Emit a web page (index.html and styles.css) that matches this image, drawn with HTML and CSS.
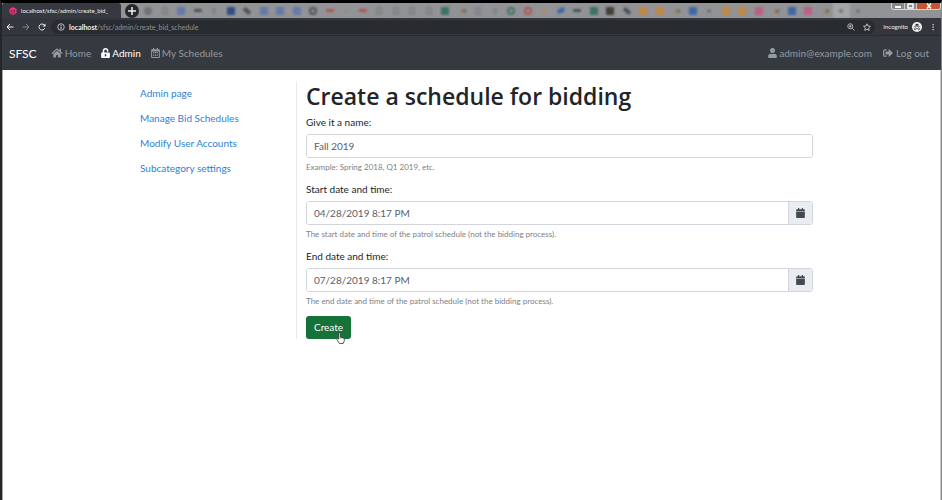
FILE: index.html
```html
<!DOCTYPE html>
<html lang="en">
<head>
<meta charset="utf-8">
<meta name="viewport" content="width=device-width, initial-scale=1">
<title>localhost/sfsc/admin/create_bid_schedule</title>
<link rel="stylesheet" href="styles.css">
</head>
<body>
<div class="window">
  <div class="tabstrip">
    <div class="tab">
      <svg class="tab-logo" viewBox="0 0 16 16" aria-hidden="true"><path fill="#f0387c" d="M8 0l7 4v8l-7 4-7-4V4z"/><path fill="none" stroke="#7d1742" stroke-width="1.500" d="M4.500 5.500v4a3.500 3 0 0 0 7 0v-4M5 6l2.500 2.500L11 5.500"/></svg>
      <span class="tab-title">localhost/sfsc/admin/create_bid_</span>
      <button class="tab-close" aria-label="Close tab"><svg viewBox="0 0 10 10"><path d="M1.500 1.500l7 7m0-7l-7 7" fill="none" stroke="currentColor" stroke-width="1.500"/></svg></button>
    </div>
    <button class="new-tab" aria-label="New tab"><svg viewBox="0 0 14 14"><path d="M7 3v8M3 7h8" fill="none" stroke="currentColor" stroke-width="1.500"/></svg></button>
    <div class="favicons" aria-hidden="true">
      <i class="round gray"></i><i class="page"></i><i class="blue"></i><i class="flat dark"></i><i class="page small"></i><i class="navy"></i><i class="slant dark"></i><i class="blue"></i><i class="blue"></i><i class="blue"></i><i class="ring dark"></i><i class="flat red"></i><i class="dot tan"></i><i class="flat red"></i><i class="page"></i><i class="page"></i><i class="page"></i><i class="page"></i><i class="green"></i><i class="wedge"></i><i class="page"></i><i class="page small"></i><i class="ring green"></i><i class="ring red"></i><i class="dot orange"></i><i class="leaf blue"></i><i class="flat dark"></i><i class="green"></i><i class="olive"></i><i class="slant dark"></i><i class="orange"></i><i class="orange"></i><i class="wedge"></i><i class="blue strong"></i><i class="dot gray"></i><i class="orange"></i><i class="orange"></i><i class="pink"></i><i class="wedge"></i><i class="blue strong"></i><i class="pink"></i><i class="wedge"></i><i class="dot gray current"></i><i class="dot gray"></i>
    </div>
    <div class="window-controls">
      <button aria-label="Minimize"><svg viewBox="0 0 10 6"><path d="M2 4h6" stroke="#fff" stroke-width="2"/></svg></button>
      <button aria-label="Maximize"><svg viewBox="0 0 10 6"><path d="M3 1h5v4H3z" fill="none" stroke="#fff" stroke-width="1.500"/></svg></button>
      <button class="close" aria-label="Close"><svg viewBox="0 0 10 6"><path d="M3 .5l4 5m0-5l-4 5" fill="none" stroke="#fff" stroke-width="1.500"/></svg></button>
    </div>
  </div>

  <div class="toolbar">
    <button aria-label="Back"><svg viewBox="0 0 16 16"><path d="M15 8H2m6-6L2 8l6 6" fill="none" stroke="#f1f1f1" stroke-width="2"/></svg></button>
    <button aria-label="Forward"><svg viewBox="0 0 16 16"><path d="M1 8h13M8 2l6 6-6 6" fill="none" stroke="#85878b" stroke-width="2"/></svg></button>
    <button aria-label="Reload"><svg viewBox="0 0 16 16"><path d="M13.500 10.500A6 6 0 1 1 12.500 4" fill="none" stroke="#f1f1f1" stroke-width="2"/><path d="M15 1v6H9z" fill="#f1f1f1"/></svg></button>
    <div class="omnibox">
      <svg viewBox="0 0 16 16" aria-hidden="true"><circle cx="8" cy="8" r="6.500" fill="none" stroke="#dfe0e2" stroke-width="1.600"/><path d="M8 7v5M8 4v1.800" stroke="#dfe0e2" stroke-width="2"/></svg>
      <div class="url" role="textbox" contenteditable="true" spellcheck="false" aria-label="Address"><b>localhost</b>/sfsc/admin/create_bid_schedule</div>
      <button aria-label="Zoom"><svg viewBox="0 0 16 16"><circle cx="6.500" cy="6.500" r="5" fill="none" stroke="#d5d6d8" stroke-width="1.600"/><path d="M10.500 10.500l4.500 4.500M4 6.500h5M6.500 4v5" stroke="#d5d6d8" stroke-width="1.600"/></svg></button>
      <button aria-label="Bookmark"><svg viewBox="0 0 16 16"><path d="M8 1.500l2 4.500 5 .5-3.700 3.300L12.400 15 8 12.200 3.600 15l1.100-5.200L1 6.500 6 6z" fill="none" stroke="#e4e5e7" stroke-width="1.500"/></svg></button>
    </div>
    <span class="incognito">Incognito</span>
    <svg class="spy" viewBox="0 0 20 20" aria-hidden="true"><circle cx="10" cy="10" r="10" fill="#f1f1f1"/><path d="M6.500 7.500l1-4 2.500.7 2.500-.7 1 4zM3.500 8.300h13v1.400h-13z" fill="#303236"/><path d="M8.500 13q1.500-1 3 0" fill="none" stroke="#303236"/><circle cx="6.500" cy="13.500" r="2" fill="none" stroke="#303236" stroke-width="1.300"/><circle cx="13.500" cy="13.500" r="2" fill="none" stroke="#303236" stroke-width="1.300"/></svg>
    <button aria-label="Menu"><svg viewBox="0 0 16 16"><path d="M7 2h2.500v2.500H7zM7 7h2.500v2.500H7zM7 12h2.500v2.500H7z" fill="#dedfe1"/></svg></button>
  </div>

  <header class="navbar">
    <a class="brand" href="#">SFSC</a>
    <nav class="links">
      <a href="#"><svg class="wide" viewBox="0 0 576 512" aria-hidden="true"><path fill="currentColor" d="M280 148L96 300v164a16 16 0 0 0 16 16h112a16 16 0 0 0 16-16v-96a16 16 0 0 1 16-16h64a16 16 0 0 1 16 16v96a16 16 0 0 0 16 16h112a16 16 0 0 0 16-16V300L296 148a12 12 0 0 0-16 0zm292 103l-84-69V44a12 12 0 0 0-12-12h-56a12 12 0 0 0-12 12v73l-90-74a48 48 0 0 0-61 0L4 251a12 12 0 0 0-1 17l25 31a12 12 0 0 0 17 2L280 107a12 12 0 0 1 16 0l235 194a12 12 0 0 0 17-2l26-31a12 12 0 0 0-2-17z"/></svg>Home</a>
      <a class="active" href="#"><svg viewBox="0 0 448 512" aria-hidden="true"><path fill="currentColor" fill-rule="evenodd" d="M400 224H160v-74c0-36 28-66 64-70 40 0 72 30 72 72v16a24 24 0 0 0 24 24h32a24 24 0 0 0 24-24v-16C376 68 308 0 224 0S80 68 80 152v72H48a48 48 0 0 0-48 48v192a48 48 0 0 0 48 48h352a48 48 0 0 0 48-48V272a48 48 0 0 0-48-48zM264 392a40 40 0 0 1-80 0v-48a40 40 0 0 1 80 0z"/></svg>Admin</a>
      <a href="#"><svg viewBox="0 0 448 512" aria-hidden="true"><path fill="currentColor" fill-rule="evenodd" d="M400 64h-48V12a12 12 0 0 0-12-12h-40a12 12 0 0 0-12 12v52H160V12a12 12 0 0 0-12-12h-40a12 12 0 0 0-12 12v52H48a48 48 0 0 0-48 48v352a48 48 0 0 0 48 48h352a48 48 0 0 0 48-48V112a48 48 0 0 0-48-48zM48 176h352v288H48z"/><path fill="currentColor" d="M96 208h64v64H96zm96 0h64v64h-64zm96 0h64v64h-64zM96 336h64v64H96zm96 0h64v64h-64zm96 0h64v64h-64z"/></svg>My Schedules</a>
    </nav>
    <nav class="links account">
      <a href="#"><svg viewBox="0 0 448 512" aria-hidden="true"><path fill="currentColor" d="M224 256a128 128 0 1 0 0-256 128 128 0 0 0 0 256zm90 32h-17a174 174 0 0 1-146 0h-17A134 134 0 0 0 0 422v42a48 48 0 0 0 48 48h352a48 48 0 0 0 48-48v-42a134 134 0 0 0-134-134z"/></svg>admin@example.com</a>
      <a href="#"><svg class="wide" viewBox="0 0 512 512" aria-hidden="true"><path fill="currentColor" d="M497 273L329 441c-15 15-41 4-41-17v-96H152a24 24 0 0 1-24-24v-96a24 24 0 0 1 24-24h136V88c0-21 26-32 41-17l168 168a24 24 0 0 1 0 34zM192 436v-40a12 12 0 0 0-12-12H96a32 32 0 0 1-32-32V160a32 32 0 0 1 32-32h84a12 12 0 0 0 12-12V76a12 12 0 0 0-12-12H96a96 96 0 0 0-96 96v192a96 96 0 0 0 96 96h84a12 12 0 0 0 12-12z"/></svg>Log out</a>
    </nav>
  </header>

  <div class="page-body">
    <nav class="sidebar">
      <a href="#">Admin page</a>
      <a href="#">Manage Bid Schedules</a>
      <a href="#">Modify User Accounts</a>
      <a href="#">Subcategory settings</a>
    </nav>
    <main>
      <h1>Create a schedule for bidding</h1>
      <form>
        <div class="field">
          <label for="name">Give it a name:</label>
          <div class="control"><input id="name" type="text" value="Fall 2019"></div>
          <small>Example: Spring 2018, Q1 2019, etc.</small>
        </div>
        <div class="field">
          <label for="start">Start date and time:</label>
          <div class="control">
            <input id="start" type="text" value="04/28/2019 8:17 PM">
            <button type="button" aria-label="Pick start date"><svg viewBox="0 0 448 512"><path fill="currentColor" d="M0 192h448v272a48 48 0 0 1-48 48H48a48 48 0 0 1-48-48zM448 160v-48a48 48 0 0 0-48-48h-48V12a12 12 0 0 0-12-12h-40a12 12 0 0 0-12 12v52H160V12a12 12 0 0 0-12-12h-40a12 12 0 0 0-12 12v52H48a48 48 0 0 0-48 48v48z"/></svg></button>
          </div>
          <small>The start date and time of the patrol schedule (not the bidding process).</small>
        </div>
        <div class="field">
          <label for="end">End date and time:</label>
          <div class="control">
            <input id="end" type="text" value="07/28/2019 8:17 PM">
            <button type="button" aria-label="Pick end date"><svg viewBox="0 0 448 512"><path fill="currentColor" d="M0 192h448v272a48 48 0 0 1-48 48H48a48 48 0 0 1-48-48zM448 160v-48a48 48 0 0 0-48-48h-48V12a12 12 0 0 0-12-12h-40a12 12 0 0 0-12 12v52H160V12a12 12 0 0 0-12-12h-40a12 12 0 0 0-12 12v52H48a48 48 0 0 0-48 48v48z"/></svg></button>
          </div>
          <small>The end date and time of the patrol schedule (not the bidding process).</small>
        </div>
        <div class="submit">
          <button type="submit">Create</button>
          <svg class="pointer" viewBox="0 0 16 22" aria-hidden="true"><path fill="#fff" stroke="#333" stroke-width="1.500" stroke-linejoin="round" d="M5 13V3a1.500 1.500 0 0 1 3 0v6l5.500 1.500q1.500.5 1.500 2V16l-2 5H6l-4.500-7c-1-2 1-3 2-2z"/><path d="M8 9v3m2.500-2.400V12m2.300-1.700V13" stroke="#333"/></svg>
        </div>
      </form>
    </main>
  </div>
</div>
</body>
</html>
```
FILE: styles.css
```css
*, *::before { box-sizing: border-box; }
body { margin: 0; background: #fff; color: #212529; font: 10px/15px Lato, "Open Sans", sans-serif; }
button { margin: 0; padding: 0; border: 0; background: none; font: inherit; }
svg { display: block; flex: none; }
a { text-decoration: none; }

.window {
  min-height: 100vh;
  border-top: 3px solid #000;
  border-left: 2px solid #25262b;
  border-right: 1px solid #85868a;
  box-shadow: inset 1px 0 #aaa, inset -1px 0 #ccc;
}

/* Browser tabs */
.tabstrip { display: flex; height: 15px; background: #929396; overflow: hidden; }
.tab {
  display: flex; align-items: center; gap: 4px; width: 119px; padding: 0 4px 0 7px;
  border-radius: 3px 3px 0 0; background: #363940; color: #eee; font-size: 6px; line-height: 15px;
}
.tab-logo { width: 8px; height: 8px; }
.tab-title { flex: 1; white-space: nowrap; }
.tab-close { width: 5px; margin: 0 2px 0 4px; color: #ddd; }
.new-tab { flex: none; align-self: center; width: 14px; margin: 0 1px 0 4px; border-radius: 50%; background: #26282c; color: #eee; }
.favicons { flex: 1; display: flex; filter: blur(1px); }
.favicons i { flex: 1; display: flex; align-items: center; justify-content: center; color: #7d8084; }
.favicons i::before { content: ""; width: 8px; height: 8px; border-radius: 1px; background: currentColor; }
.favicons .gray { color: #6f7276; }
.favicons .blue { color: #667ba6; }
.favicons .blue.strong, .favicons .leaf { color: #3f68a5; }
.favicons .navy { color: #344d83; }
.favicons .dark { color: #4c4f53; }
.favicons .green { color: #3c7363; }
.favicons .olive { color: #444034; }
.favicons .orange { color: #c08845; }
.favicons .tan { color: #a48578; }
.favicons .red { color: #ad5550; }
.favicons .pink { color: #bc5f83; }
.favicons .page::before { width: 6px; background: #898a8d; border: 1px solid #7c7e81; }
.favicons .small::before { width: 4px; height: 6px; }
.favicons .round::before { border-radius: 50%; }
.favicons .ring::before { border: 2px solid currentColor; border-radius: 50%; background: none; }
.favicons .flat::before { height: 3px; }
.favicons .dot::before { width: 4px; height: 4px; border-radius: 50%; }
.favicons .slant::before { height: 4px; transform: rotate(40deg); }
.favicons .leaf::before { height: 5px; border-radius: 4px 0; transform: rotate(-15deg); }
.favicons .wedge::before { height: 4px; background: linear-gradient(110deg, #929396 30%, #a47e58 50%, #5d5c5c); }
.favicons .current { background: #a5a6a8; }
.window-controls { display: flex; width: 50px; height: 7px; margin-left: 25px; border: 1px solid #d9d9dc; border-top: 0; border-radius: 0 0 3px 3px; overflow: hidden; }
.window-controls button { flex: 1; background: #86888e; border-right: 1px solid #ccc; }
.window-controls .close { flex: 2; border: 0; background: #c9542f; }
.window-controls svg { width: 10px; height: 6px; margin: 0 auto; }

/* Address row */
.toolbar { display: flex; align-items: center; gap: 8px; height: 18px; padding: 0 4px; background: #33363c; border-bottom: 1px solid #292b30; }
.toolbar svg { width: 8px; height: 8px; }
.omnibox { flex: 1; display: flex; align-items: center; gap: 4px; height: 14px; margin-left: -3px; padding: 0 4px 0 6px; border-radius: 7px; background: #282b2f; }
.url { flex: 1; color: #909296; font-size: 7px; line-height: 14px; outline: 0; white-space: nowrap; }
.url b { color: #f0f0f0; font-weight: 700; }
.omnibox button + button { margin-left: 4px; }
.incognito { color: #eee; font-size: 6px; }
.toolbar .spy { width: 10px; height: 10px; margin: 0 -1px 0 -4px; }

/* Site navigation */
.navbar { display: flex; align-items: center; height: 34px; padding: 0 12px 0 7px; background: #353a41; color: #96999e; }
.navbar a { color: inherit; }
.navbar .brand { margin-right: 14px; color: #fff; font-size: 12px; }
.links { display: flex; gap: 10px; }
.links a { display: flex; align-items: center; gap: 2px; }
.links svg { width: 9px; height: 10px; }
.links .wide { width: 12px; }
.links .active { color: #fff; }
.account { margin-left: auto; }

/* Content */
.page-body { display: grid; grid-template-columns: 166px 1fr; max-width: 683px; margin: 11px auto 0; }
.sidebar { display: flex; flex-direction: column; }
.sidebar a { padding: 5px 10px; line-height: 15px; color: #2d7fd8; }
main { padding-left: 9px; border-left: 1px solid #e9eaee; }
h1 { margin: 0 0 4px; font: 600 23px/30px "Open Sans", "Noto Sans", sans-serif; }
.field { margin-bottom: 9px; }
.field label { display: block; margin-bottom: 4px; }
.control { display: flex; height: 24px; margin-bottom: 3px; border: 1px solid #d2d6dc; border-radius: 3px; overflow: hidden; }
.control input { flex: 1; min-width: 0; padding: 0 7px; border: 0; outline: 0; background: #fff; color: #5a6068; font: inherit; }
.control button { width: 24px; border-left: 1px solid #d2d6dc; background: #e9ecf2; color: #454a51; }
.control button svg { width: 9px; height: 10px; margin: 0 auto; }
.field small { display: block; font-size: 8px; line-height: 12px; color: #7c8187; }
.submit { position: relative; width: max-content; }
.submit button { display: block; height: 23px; padding: 0 8px; border-radius: 3px; background: #157238; color: #fff; }
.pointer { position: absolute; right: 6px; bottom: -5px; width: 9px; height: 12px; }
```
